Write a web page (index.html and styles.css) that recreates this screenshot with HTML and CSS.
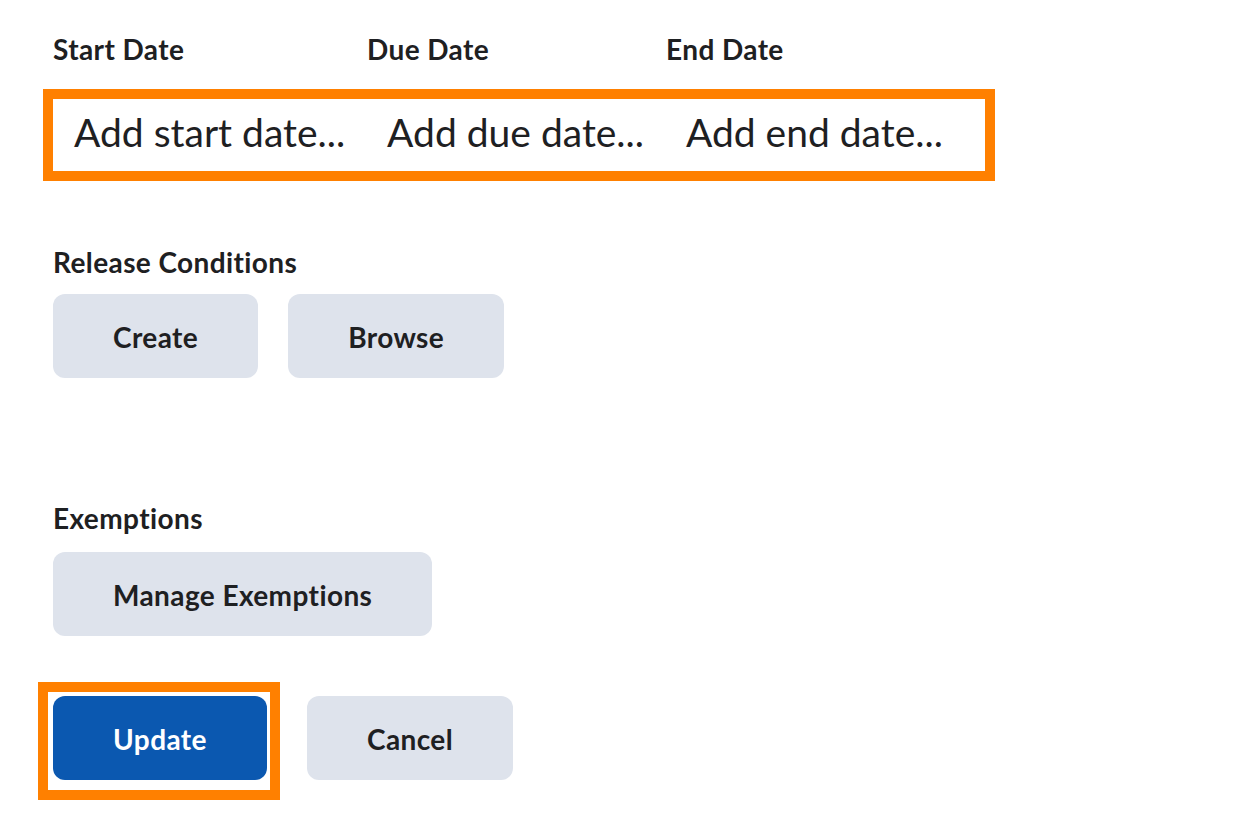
FILE: index.html
```html
<!DOCTYPE html>
<html lang="en">
<head>
    <meta charset="UTF-8">
    <title>Availability Dates &amp; Conditions</title>
    <link rel="stylesheet" href="styles.css">
</head>
<body>

<div class="content">

    <!--dates-->
    <div class="date_labels">
        <div class="label date_label_start">Start Date</div>
        <div class="label date_label_due">Due Date</div>
        <div class="label">End Date</div>
    </div>
    <div class="date_box">
        <span class="placeholder">Add start date...</span>
        <span class="placeholder">Add due date...</span>
        <span class="placeholder">Add end date...</span>
    </div>

    <!--release conditions-->
    <div class="label section_label release_label">Release Conditions</div>
    <div class="button_row">
        <button class="btn">Create</button>
        <button class="btn">Browse</button>
    </div>

    <!--exemptions-->
    <div class="label section_label exemptions_label">Exemptions</div>
    <div class="button_row">
        <button class="btn">Manage Exemptions</button>
    </div>

    <!--actions-->
    <div class="action_row">
        <div class="highlight">
            <button class="btn btn_primary">Update</button>
        </div>
        <button class="btn btn_cancel">Cancel</button>
    </div>
</div>

</body>
</html>
```

FILE: styles.css
```css
body, html {
    margin: 0;
    padding: 0;
    background: #ffffff;
    color: #1e2022;
    font-family: "Lato", "Noto Sans", sans-serif;
}

.content {
    display: flex;
    flex-direction: column;
    align-items: flex-start;
    padding: 33px 0 0 53px;
}

.label {
    font-size: 28px;
    line-height: 32px;
    font-weight: 700;
    letter-spacing: 0.4px;
}

.date_labels {
    display: flex;
}

.date_label_start {
    width: 314px;
}

.date_label_due {
    width: 299px;
}

.date_box {
    display: flex;
    gap: 42px;
    width: 911px;
    height: 72px;
    margin: 24px 0 0 -10px;
    padding: 0 0 0 21px;
    border: 10px solid #ff8000;
}

.placeholder {
    font-size: 39px;
    line-height: 66px;
    white-space: nowrap;
}

.release_label {
    margin-top: 65px;
}

.exemptions_label {
    margin-top: 124px;
}

.button_row {
    display: flex;
    gap: 30px;
    margin-top: 16px;
}

.exemptions_label + .button_row {
    margin-top: 18px;
}

.btn {
    height: 84px;
    padding: 2px 60px 0 60px;
    border: none;
    border-radius: 12px;
    background: #dee3ec;
    color: #1e2022;
    font-family: "Lato", "Noto Sans", sans-serif;
    font-size: 28px;
    line-height: 82px;
    font-weight: 700;
    letter-spacing: 0.4px;
    white-space: nowrap;
}

.action_row {
    display: flex;
    align-items: flex-start;
    margin: 46px 0 0 -15px;
}

.highlight {
    padding: 4px 3px 10px 5px;
    border: 10px solid #ff8000;
}

.btn_primary {
    width: 214px;
    padding: 2px 0 0 0;
    background: #0b58b0;
    color: #ffffff;
}

.btn_cancel {
    width: 206px;
    padding: 2px 0 0 0;
    margin: 14px 0 0 27px;
}
```
